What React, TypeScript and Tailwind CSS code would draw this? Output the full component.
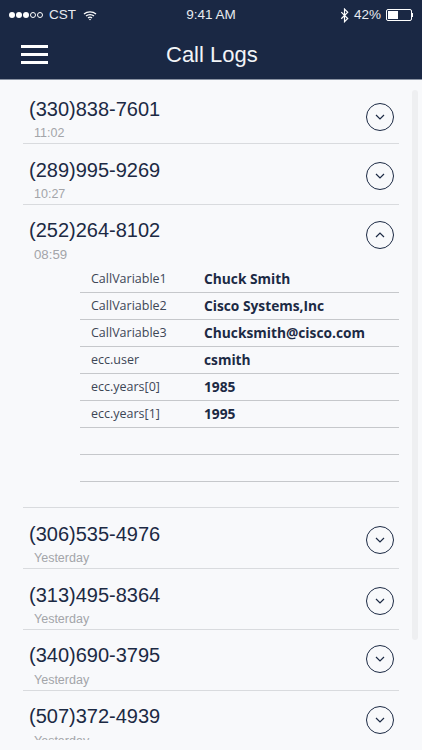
const calls = [
  { phone: "(330)838-7601", time: "11:02", timeSize: "text-[12.5px]", phoneTop: "pt-[14px]", iconTop: "top-[20px]" },
  { phone: "(289)995-9269", time: "10:27", timeSize: "text-[12.5px]", phoneTop: "pt-[14px]", iconTop: "top-[18px]" },
  {
    phone: "(252)264-8102",
    time: "08:59",
    timeSize: "text-[13.25px]",
    phoneTop: "pt-[13px]",
    iconTop: "top-[16px]",
    vars: [
      ["CallVariable1", "Chuck Smith"],
      ["CallVariable2", "Cisco Systems,Inc"],
      ["CallVariable3", "Chucksmith@cisco.com"],
      ["ecc.user", "csmith"],
      ["ecc.years[0]", "1985"],
      ["ecc.years[1]", "1995"],
      ["", ""],
      ["", ""],
    ],
  },
  { phone: "(306)535-4976", time: "Yesterday", timeSize: "text-[12.5px]", phoneTop: "pt-[14px]", iconTop: "top-[18px]" },
  { phone: "(313)495-8364", time: "Yesterday", timeSize: "text-[12.5px]", phoneTop: "pt-[14px]", iconTop: "top-[18px]" },
  { phone: "(340)690-3795", time: "Yesterday", timeSize: "text-[12.5px]", phoneTop: "pt-[13px]", iconTop: "top-[15px]" },
  { phone: "(507)372-4939", time: "Yesterday", timeSize: "text-[12.5px]", phoneTop: "pt-[13px]", iconTop: "top-[15px]" },
];

function StatusBar() {
  return (
    <div className="flex h-[21px] items-center justify-between pl-[9px] pr-[9px] pt-[9px] text-[13.5px] text-[#e8ebf0]">
      <div className="flex w-[120px] items-center gap-[1px]">
        {[0, 1, 2].map((i) => (
          <span key={i} className="h-[6px] w-[6px] rounded-full bg-white" />
        ))}
        {[0, 1].map((i) => (
          <span key={i} className="h-[6px] w-[6px] rounded-full border-[0.5px] border-white" />
        ))}
        <span className="ml-[5px]">CST</span>
        <svg viewBox="0 0 14 10" className="ml-[6px] h-[11px] w-[14px]" fill="none" stroke="white" strokeWidth="1.3">
          <path d="M1 3.6c3.3-3 8.7-3 12 0" />
          <path d="M3 5.6c2.2-2 5.8-2 8 0" />
          <path d="M5 7.5c1.1-1 2.9-1 4 0" />
          <circle cx="7" cy="9" r="0.8" fill="white" stroke="none" />
        </svg>
      </div>
      <span>9:41 AM</span>
      <div className="flex w-[120px] items-center justify-end">
        <svg viewBox="0 0 8 14" className="h-[15px] w-[9px]" fill="none" stroke="white" strokeWidth="1.1">
          <path d="M1 3.8l6 6-3 3V1l3 3-6 6" />
        </svg>
        <span className="ml-[5px]">42%</span>
        <div className="ml-[5px] flex h-[12px] w-[26px] items-center rounded-[2px] border border-white p-[1px]">
          <div className="h-full w-[10px] bg-white" />
        </div>
        <div className="h-[4px] w-[1px] bg-white" />
      </div>
    </div>
  );
}

function Chevron({ up }: { up: boolean }) {
  return (
    <div className="flex h-[28px] w-[28px] items-center justify-center rounded-full border-[1.3px] border-[#1c2a44]">
      <svg viewBox="0 0 10 6" className="h-[6px] w-[10px]" fill="none" stroke="#1c2a44" strokeWidth="1.2">
        <path d={up ? "M1 5l4-4 4 4" : "M1 1l4 4 4-4"} />
      </svg>
    </div>
  );
}

function VarRow({ label, value }: { label: string; value: string }) {
  return (
    <div className="flex h-[27px] items-center border-b border-[#c6c8cb] pl-[11px] font-['Open_Sans',sans-serif]">
      <span className="w-[113px] text-[12.5px] text-[#3d4656]">{label}</span>
      <span className="text-[13.75px] font-bold text-[#1c2a44]">{value}</span>
    </div>
  );
}

function CallRow({
  phone,
  time,
  timeSize,
  phoneTop,
  iconTop,
  vars,
}: {
  phone: string;
  time: string;
  timeSize: string;
  phoneTop: string;
  iconTop: string;
  vars?: string[][];
}) {
  return (
    <div className="border-b border-[#d9dbde]">
      <div className="relative h-[60px] pl-[6px]">
        <div className={`h-[42px] ${phoneTop}`}>
          <div className="text-[20px] leading-[24px] text-[#1c2a44]">{phone}</div>
        </div>
        <div className={`pl-[5px] leading-[16px] text-[#a3a5a9] ${timeSize}`}>{time}</div>
        <div className={`absolute right-[5px] ${iconTop}`}>
          <Chevron up={!!vars} />
        </div>
      </div>
      {vars && (
        <div className="ml-[57px] pb-[25px] pt-[1px]">
          {vars.map(([label, value], i) => (
            <VarRow key={i} label={label} value={value} />
          ))}
        </div>
      )}
    </div>
  );
}

export default function App() {
  return (
    <div className="relative h-[750px] w-[422px] overflow-hidden bg-[#f8f9fb] font-['Liberation_Sans',sans-serif]">
      <header className="h-[80px] border-b border-[#8a93a3] bg-[#1a2844]">
        <StatusBar />
        <div className="flex h-[58px] items-center pl-[21px] pt-[9px]">
          <div className="flex w-[27px] flex-col gap-[5px]">
            <span className="h-[3px] bg-white" />
            <span className="h-[3px] bg-white" />
            <span className="h-[3px] bg-white" />
          </div>
          <h1 className="ml-[118px] text-[22px] text-[#f2f4f7]">Call Logs</h1>
        </div>
      </header>
      <main className="h-[660px] overflow-hidden pl-[23px] pr-[23px] pt-[3px]">
        {calls.map((c) => (
          <CallRow
            key={c.phone}
            phone={c.phone}
            time={c.time}
            timeSize={c.timeSize}
            phoneTop={c.phoneTop}
            iconTop={c.iconTop}
            vars={c.vars}
          />
        ))}
      </main>
      {/* scrollbar sits over the list */}
      <div className="absolute left-[412px] top-[90px] h-[550px] w-[6px] rounded-full bg-[#eeeff1]" />
    </div>
  );
}
